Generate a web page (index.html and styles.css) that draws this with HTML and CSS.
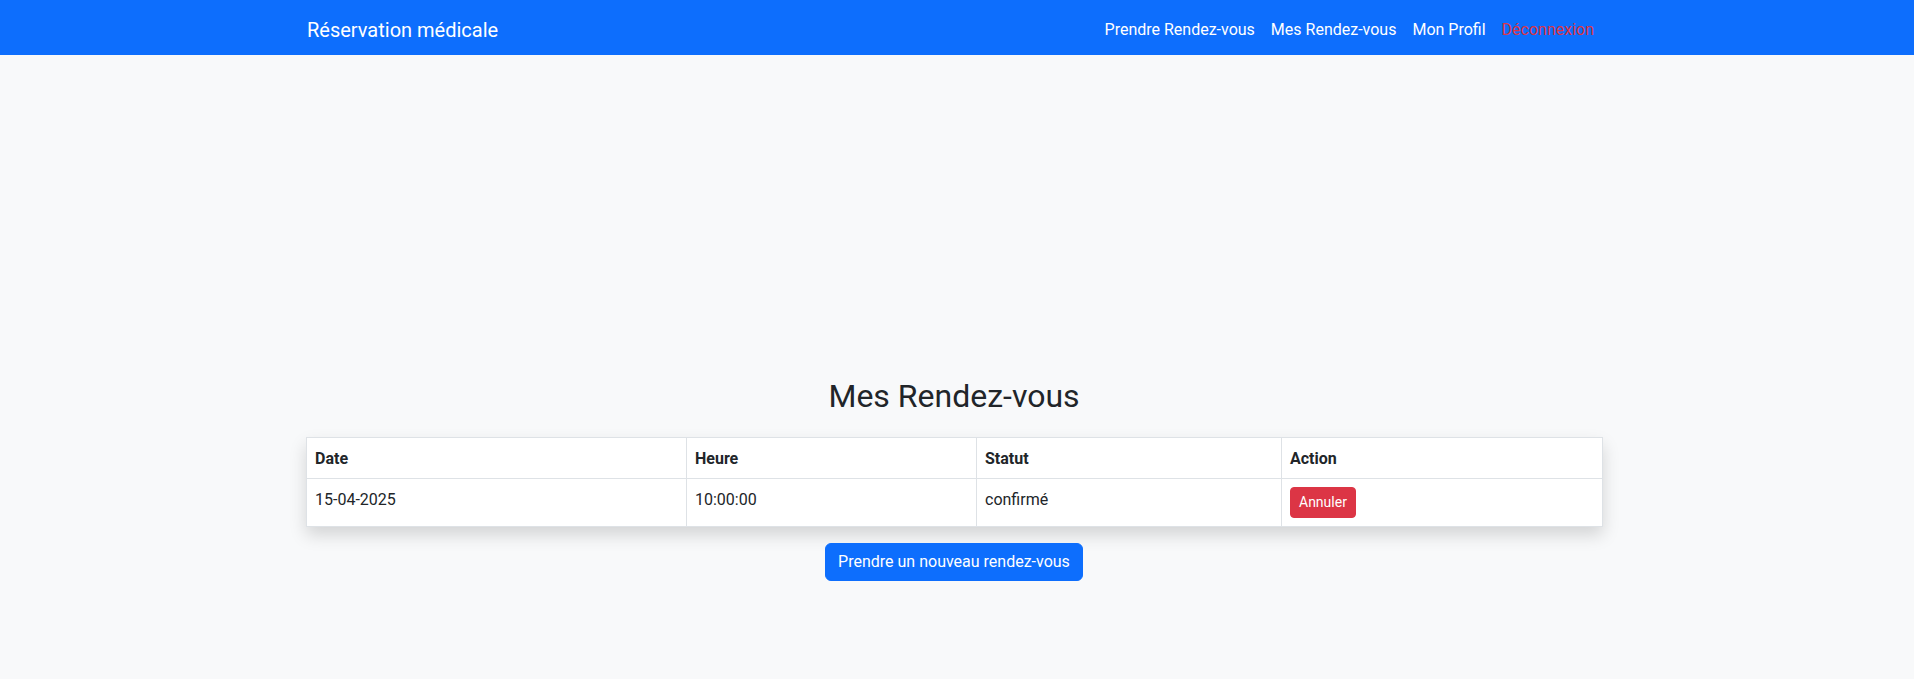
FILE: index.html
```html
<!DOCTYPE html>
<html lang="fr">
<head>
<meta charset="utf-8">
<title>Mes Rendez-vous</title>
<link rel="stylesheet" href="styles.css">
</head>
<body>
<nav class="navbar">
  <div class="container nav-inner">
    <a class="brand" href="#">Réservation médicale</a>
    <ul class="nav-links">
      <li><a class="nav-link" href="#">Prendre Rendez-vous</a></li>
      <li><a class="nav-link" href="#">Mes Rendez-vous</a></li>
      <li><a class="nav-link" href="#">Mon Profil</a></li>
      <li><a class="nav-link nav-danger" href="#">Déconnexion</a></li>
    </ul>
  </div>
</nav>
<main class="page">
  <div class="container">
    <h2 class="title">Mes Rendez-vous</h2>
    <table class="rdv-table">
      <colgroup>
        <col class="c-date"><col class="c-heure"><col class="c-statut"><col class="c-action">
      </colgroup>
      <thead>
        <tr><th>Date</th><th>Heure</th><th>Statut</th><th>Action</th></tr>
      </thead>
      <tbody>
        <tr>
          <td>15-04-2025</td>
          <td>10:00:00</td>
          <td>confirmé</td>
          <td class="cell-btn"><button class="btn btn-sm btn-danger" type="button">Annuler</button></td>
        </tr>
      </tbody>
    </table>
    <div class="actions">
      <a class="btn btn-primary" href="#">Prendre un nouveau rendez-vous</a>
    </div>
  </div>
</main>
</body>
</html>
```
FILE: styles.css
```css
* { box-sizing: border-box; }

html, body { margin: 0; padding: 0; }

body {
  font-family: "Segoe UI", Roboto, "Noto Sans", "Liberation Sans", sans-serif;
  font-size: 16px;
  line-height: 1.5;
  color: #212529;
  background: #f8f9fa;
  padding-right: 6px;
}

.container {
  width: 1296px;
  margin: 0 auto;
}

/* Navbar */
.navbar {
  background: #0d6efd;
  height: 55px;
  margin-right: -6px;
  padding-right: 6px;
}

.nav-inner {
  height: 55px;
  display: flex;
  align-items: flex-start;
  justify-content: space-between;
}

.brand {
  color: #fff;
  font-size: 20px;
  line-height: 30px;
  text-decoration: none;
  padding-top: 15px;
  padding-left: 1px;
}

.nav-links {
  list-style: none;
  margin: 0;
  padding: 9.5px 0 0;
  display: flex;
}

.nav-link {
  display: block;
  padding: 8px;
  color: #fff;
  text-decoration: none;
  line-height: 24px;
}

.nav-danger { color: #dc3545; }

/* Content */
.page {
  padding-top: 320px;
}

.title {
  margin: 0 0 22px;
  padding-top: 2px;
  font-size: 32px;
  font-weight: 400;
  line-height: 1.2;
  text-align: center;
}

.rdv-table {
  width: 100%;
  table-layout: fixed;
  border-collapse: collapse;
  background: #fff;
  margin-bottom: 16px;
  box-shadow: 0 8px 16px rgba(0, 0, 0, 0.15);
}

.c-date { width: 380px; }
.c-heure { width: 290px; }
.c-statut { width: 305px; }
.c-action { width: 321px; }

.rdv-table th,
.rdv-table td {
  border: 1px solid #dee2e6;
  padding: 9px 8px 7px;
  text-align: left;
  vertical-align: top;
}

.rdv-table td.cell-btn {
  padding: 8px;
}

.rdv-table th { font-weight: 700; }

.actions {
  display: flex;
  justify-content: center;
}

.btn {
  display: inline-block;
  font-family: inherit;
  font-size: 16px;
  line-height: 24px;
  padding: 6px 12px;
  border: 1px solid transparent;
  border-radius: 6px;
  text-decoration: none;
  cursor: pointer;
}

.btn-primary {
  background: #0d6efd;
  border-color: #0d6efd;
  color: #fff;
}

.btn-sm {
  font-size: 14px;
  line-height: 21px;
  padding: 4px 8px;
  border-radius: 4px;
}

.btn-danger {
  background: #dc3545;
  border-color: #dc3545;
  color: #fff;
}
```
